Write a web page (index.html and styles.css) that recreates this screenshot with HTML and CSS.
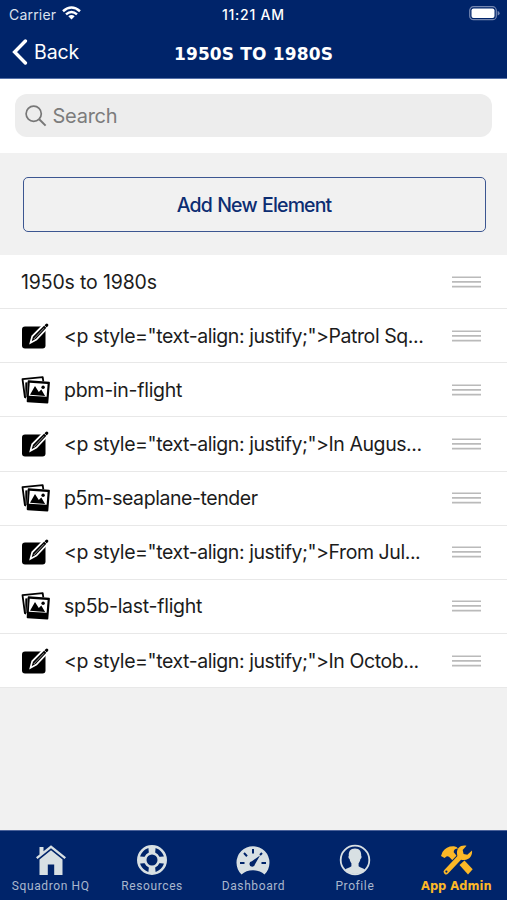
FILE: index.html
```html
<!DOCTYPE html>
<html lang="en">
<head>
<meta charset="utf-8">
<meta name="viewport" content="width=device-width">
<title>1950s to 1980s</title>
<link rel="stylesheet" href="styles.css">
</head>
<body>
<svg width="0" height="0" class="defs">
  <symbol id="edit" viewBox="0 0 30 28">
    <rect x="1" y="4.500" width="23.500" height="22" rx="3"/>
    <path d="M10.500 19.500l1.300-5L24.600 1.700q1.200-1 2.400.1t.1 2.400L15 17z" stroke="#fff" stroke-width="3"/>
    <path d="M10.700 19.200l1.300-4.500L24.800 1.900q1-1 2.100.1t.1 2.100L15 16.800z"/>
    <path d="M12.800 17L23 6.200" stroke="#ddd" stroke-width=".7"/>
    <path d="M23 3.200l3.100 3" stroke="#fff" stroke-width=".8"/>
  </symbol>
  <symbol id="photos" viewBox="0 0 30 28">
    <path d="M5.200 21.500l-1.300-.3L1.500 3.200 21.700 1.200l.6 4.200" fill="#fff" stroke="#000" stroke-width="1.800" stroke-linejoin="round"/>
    <path d="M4.300 6.500l2.200-.3L5.600 21l-1.200 0z"/>
    <path d="M7.600 5.200l20.400 1.500-1.600 20-19.800-1.400z" stroke="#000" stroke-width="1.800" stroke-linejoin="round"/>
    <path d="M8.700 6.700l17.900 1.300-1 12.700-17.800-1z" fill="#fff"/>
    <path d="M9 18.800l5-8.800 3.800 6.100 2.500-2.600 3.800 6.400z"/>
    <circle cx="22.100" cy="11.200" r="1.700"/>
  </symbol>
  <symbol id="grip" viewBox="0 0 29 12">
    <path d="M0 1.200h29M0 5.900h29M0 10.600h29" stroke="#bababa" stroke-width="1.600"/>
  </symbol>
</svg>
<header class="top">
  <div class="status">
    <span class="carrier">Carrier</span>
    <svg class="wifi" width="19" height="14" viewBox="0 0 19 14"><path d="M1 5.300q8.500-7.500 17 0M4 8.400q5.500-4.700 11 0" fill="none" stroke="#fff" stroke-width="2.500"/><path d="M6.300 10.200q3.200-2.600 6.400 0L9.500 13.600z" fill="#fff"/></svg>
    <span class="time">11:21 AM</span>
    <svg class="battery" width="31" height="15" viewBox="0 0 31 15"><rect x=".7" y=".7" width="26.600" height="13" rx="3.800" fill="none" stroke="#7587b1" stroke-width="1.200"/><rect x="2.500" y="2.500" width="23" height="9.400" rx="2" fill="#fff"/><path d="M28.600 5q2 .6 2 2.300t-2 2.300z" fill="#7587b1"/></svg>
  </div>
  <div class="nav">
    <div class="back"><svg width="16" height="26" viewBox="0 0 16 26"><path d="M13.400 2L2.600 13l10.800 11" fill="none" stroke="#fff" stroke-width="3.400" stroke-linecap="round"/></svg><span>Back</span></div>
    <h1>1950S TO 1980S</h1>
  </div>
</header>
<div class="search-wrap"><div class="search"><svg width="22" height="22" viewBox="0 0 22 22"><circle cx="8.700" cy="8.700" r="7.600" fill="none" stroke="#777" stroke-width="1.700"/><path d="M14.200 14.200l6.400 6.400" stroke="#777" stroke-width="2"/></svg><span>Search</span></div></div>
<div class="action"><div class="add"><span>Add New Element</span></div></div>
<main class="list">
  <div class="row"><span class="label title">1950s to 1980s</span><svg class="grip"><use href="#grip"/></svg></div>
  <div class="row"><svg class="icon"><use href="#edit"/></svg><span class="label">&lt;p style="text-align: justify;"&gt;Patrol Sq...</span><svg class="grip"><use href="#grip"/></svg></div>
  <div class="row"><svg class="icon"><use href="#photos"/></svg><span class="label name">pbm-in-flight</span><svg class="grip"><use href="#grip"/></svg></div>
  <div class="row"><svg class="icon"><use href="#edit"/></svg><span class="label">&lt;p style="text-align: justify;"&gt;In Augus...</span><svg class="grip"><use href="#grip"/></svg></div>
  <div class="row"><svg class="icon"><use href="#photos"/></svg><span class="label">p5m-seaplane-tender</span><svg class="grip"><use href="#grip"/></svg></div>
  <div class="row"><svg class="icon"><use href="#edit"/></svg><span class="label">&lt;p style="text-align: justify;"&gt;From Jul...</span><svg class="grip"><use href="#grip"/></svg></div>
  <div class="row"><svg class="icon"><use href="#photos"/></svg><span class="label name">sp5b-last-flight</span><svg class="grip"><use href="#grip"/></svg></div>
  <div class="row"><svg class="icon"><use href="#edit"/></svg><span class="label">&lt;p style="text-align: justify;"&gt;In Octob...</span><svg class="grip"><use href="#grip"/></svg></div>
</main>
<nav class="tabs">
  <div class="tab"><svg viewBox="0 0 32 32"><path d="M16 1.300L31 13.200l-1.500 1.800L16 4.300 2.500 15 1 13.200l3.500-2.800V3h4v4.200z"/><path d="M16 6.200l11.500 9.200V31h-8.300V20.500h-6.400V31H4.500V15.400z"/></svg><span>Squadron HQ</span></div>
  <div class="tab"><svg viewBox="0 0 32 32"><g class="ring"><circle cx="16" cy="16" r="13.700"/><circle cx="16" cy="16" r="6.800"/></g><path d="M12.200 2h7.600l-.8 8h-6zM12.200 30h7.600l-.8-8h-6zM2 12.200v7.600l8-.8v-6zM30 12.200v7.600l-8-.8v-6z"/></svg><span>Resources</span></div>
  <div class="tab"><svg class="wide" viewBox="0 0 34 32"><path d="M5.500 30.500A16.500 16.500 0 1 1 28.500 30.500Q24 26.200 17 26.200T5.500 30.500z"/><g class="ticks"><path d="M17 5v4.500M8 9l3 3.200M26 9l-2 2M4 19h4.500M30 19h-4.500"/></g><path class="cut" d="M24 11.500L19 20.300a2.800 2.800 0 1 1-3.100-3.100z"/></svg><span>Dashboard</span></div>
  <div class="tab"><svg viewBox="0 0 32 32"><circle cx="16" cy="16" r="14.300" fill="none" stroke="currentColor" stroke-width="1.800"/><path d="M16 4.500c4.800 0 6.500 3.200 6.200 7.200.8.900.2 3-.8 3.400-.3 2-1.100 3.400-1.800 4.200v3c1.800 1.600 4.900 1.500 6.700 3.800Q22 30 16 30T5.700 26.100c1.800-2.300 4.900-2.200 6.700-3.800v-3c-.7-.8-1.500-2.200-1.800-4.200-1-.4-1.600-2.500-.8-3.400-.3-4 1.400-7.200 6.200-7.200z"/></svg><span>Profile</span></div>
  <div class="tab active"><svg class="wide" viewBox="-2 -1 34 32"><path d="M0 11L1.500 7Q5.500.8 13 1.200q3 .2 4 2.300-4.500.2-4.300 3.800l3.300 4-4.300 4.200L8 11.700q-2-1.300-3.500.5L3.500 13z"/><path d="M18.500 20l5-4.500 8.200 8.700-4.700 5.300z"/><path class="handle-gap" d="M6 26L20 11"/><path class="handle" d="M5.200 26.800L20 11"/><path d="M25.500.8C20-.5 15.500 3 16 8.500c.2 4.500 3.500 7 7.200 6.500 5.500-.3 8.500-4.500 7.800-9.500l-4.700 4.200-3.700-.8-.9-3.800z"/><circle class="cut" cx="5.400" cy="26.600" r="1.100"/></svg><span>App Admin</span></div>
</nav>
</body>
</html>
```
FILE: styles.css
```css
* { box-sizing: border-box; }
body {
  margin: 0;
  width: 507px;
  height: 900px;
  display: flex;
  flex-direction: column;
  background: #f1f1f1;
  font-family: Inter, "Liberation Sans", sans-serif;
  color: #1c1c1c;
  overflow: hidden;
}
.defs { position: absolute; }
span, h1 { white-space: nowrap; }
.top { height: 79px; background: #00246a; color: #fff; border-bottom: 1px solid #5470a8; }
.status { height: 28px; display: grid; grid-template-columns: 52px 1fr 64px 1fr 31px; align-items: center; padding: 0 7px 0 9px; font-size: 14px; letter-spacing: .2px; }
.carrier { color: #dbe1ee; }
.wifi { margin-left: 1px; margin-top: -2px; }
.time { font-weight: 500; margin-left: -11px; letter-spacing: .75px; }
.battery { grid-column: 5; margin-top: -2px; }
.nav { height: 50px; display: grid; grid-template-columns: 100px 1fr 100px; align-items: center; padding: 0 0 2px; }
.back { display: flex; align-items: center; padding-left: 12px; gap: 6px; font-size: 19.5px; letter-spacing: -.1px; }
h1 { margin: 4px 0 0; font: bold 17px "DejaVu Sans", sans-serif; letter-spacing: .15px; text-align: center; }
.search-wrap { height: 74px; padding: 15px 15px 16px; background: #fff; }
.search { height: 43px; border-radius: 12px; background: #ededed; display: flex; align-items: center; gap: 6px; padding-left: 9.5px; font-size: 20px; letter-spacing: -.25px; color: #7c7c7c; }
.action { height: 102px; padding: 24px 21.5px 23px 22.5px; }
.add { height: 55px; border: 1.5px solid #3c5691; border-radius: 5px; display: flex; align-items: center; justify-content: center; font-size: 19.5px; font-weight: 500; letter-spacing: -.85px; word-spacing: 1px; color: #0c2d72; }
.row { height: 54.15px; background: #fff; border-bottom: 1px solid #e8e8e8; display: flex; align-items: center; padding: 0 26px 0 21px; }
.icon { width: 30px; height: 28px; margin-right: 13px; flex: none; }
.label { flex: 1; font-size: 19.5px; letter-spacing: -.43px; }
.label.name { letter-spacing: -.27px; }
.label.title { letter-spacing: -.15px; }
.grip { width: 29px; height: 12px; flex: none; }
.tabs { margin-top: auto; height: 70px; background: #00246a; border-top: 1px solid #4b629a; display: grid; grid-template-columns: repeat(5, 1fr); }
.tab { display: flex; flex-direction: column; align-items: center; padding-top: 13px; gap: 2px; color: #d8e0e3; }
.tab svg { width: 32px; height: 32px; fill: currentColor; }
.tab .wide { width: 34px; }
.tab span { font: 12px/16px Roboto, sans-serif; letter-spacing: .6px; color: #a9b7ce; }
.ring { fill: none; stroke: currentColor; stroke-width: 2.6; }
.ticks { stroke: #00246a; stroke-width: 2; }
.tab .cut { fill: #00246a; }
.handle, .handle-gap { stroke: currentColor; stroke-width: 5.2; stroke-linecap: round; }
.handle-gap { stroke: #00246a; stroke-width: 7; }
.tab.active { color: #fcb827; }
.tab.active span { font: bold 11.5px/16px "DejaVu Sans", sans-serif; letter-spacing: 0; color: #fcb827; }
```
